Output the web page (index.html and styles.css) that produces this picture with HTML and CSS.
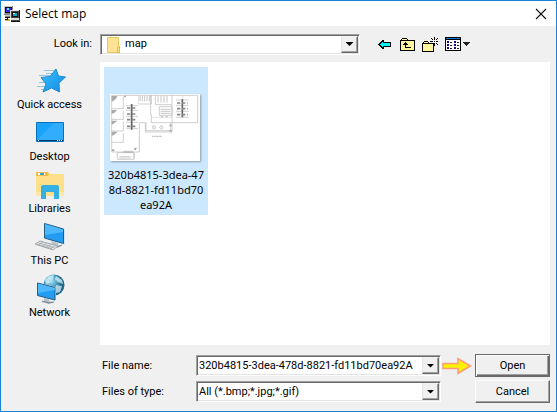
FILE: index.html
```html
<!DOCTYPE html>
<html lang="en">
<head>
<meta charset="utf-8">
<title>Select map</title>
<link rel="stylesheet" href="styles.css">
</head>
<body>
<form class="dialog">
  <header class="titlebar">
    <svg class="app-icon" width="16" height="16" viewBox="0 0 16 16" shape-rendering="crispEdges" aria-hidden="true">
      <path fill="#888" d="M0 0h9v9H0zM1 9h8v3H1z"/><path fill="#c8c8c8" d="M0 0h8v1H1v7H0zM1 9h7v1H1z"/><path fill="#111" d="M1 1h7v6H1zM1 11h7v1H1z"/><path fill="#3a28f0" d="M2 2h5v4H2z"/><path fill="#7df" d="M3 2h2v2H3z"/>
      <path fill="#444" d="M6 4h9v8H6zM7 12h9v4H7z"/><path fill="#ddd" d="M6 4h9v1H7v7H6zM7 12h8v2H7z"/><path fill="#111" d="M8 6h6v5H8zM15 4h1v8h-1zM7 15h9v1H7z"/><path fill="#10a8b8" d="M9 7h4v3H9z"/><path fill="#bff" d="M9 7h2v1H9z"/>
      <path fill="#222" d="M1 13h5v1H1zM3 12h1v3H3z"/><path fill="#e5b526" d="M1 14h3v1H1zM4 13h2v2H4z"/>
    </svg>
    <h1>Select map</h1>
    <button class="close" type="button" aria-label="Close"><svg width="12" height="12" viewBox="0 0 12 12"><path d="M1 1l10 10M11 1L1 11" stroke="#111" stroke-width="1.1"/></svg></button>
  </header>

  <div class="toolbar">
    <label class="look-label" for="look">Look in:</label>
    <div class="combo look">
      <svg class="folder" width="14" height="16" viewBox="0 0 14 16" aria-hidden="true"><path d="M.5.5h11v9h1v6H.5z" fill="#ffe394" stroke="#e9c75b"/><path d="M10.500 15.500v-5l2-1v6z" fill="#ffdf83" stroke="#e2bb42"/></svg>
      <select id="look"><option>map</option></select>
      <span class="drop"></span>
    </div>
    <div class="tools">
      <button class="tool" type="button" aria-label="Back"><svg width="13" height="9" viewBox="0 1 13 9" shape-rendering="crispEdges"><path fill="#000" d="M0 5h1V4h1V3h1V2h1V1h2v2h7v5H6v2H4V9H3V8H2V7H1V6H0z"/><path fill="#00f4ff" d="M2 5h1V4h1V3h1v1h7v3H5v1H4V7H3V6H2z"/></svg></button>
      <button class="tool" type="button" aria-label="Up one level"><svg width="15" height="13" viewBox="0 0 15 13" shape-rendering="crispEdges"><path fill="#000" d="M2 0h5v1h1v1h7v11H0V2h1V1h1z"/><path fill="#fff79b" d="M2 1h5v1H2zM1 3h13v9H1z"/><path fill="#000" d="M5 4h1v1h1v1h1v1H6v2h5v1H5V7H3V6h1V5h1z"/></svg></button>
      <button class="tool" type="button" aria-label="New folder"><svg width="17" height="15" viewBox="0 0 17 15" shape-rendering="crispEdges"><path fill="#000" d="M2 4h4v1h1v1h5v9H0V6h1V5h1z"/><path fill="#fff79b" d="M2 5h4v1H2zM1 7h10v7H1z"/><path fill="#000" d="M12 0h1v3h-1zM12 6h1v3h-1zM8 4h3v1H8zM14 4h2v1h-2zM9 1h1v1H9zM10 2h1v1h-1zM15 1h1v1h-1zM14 2h1v1h-1zM14 6h1v1h-1zM15 7h1v1h-1zM12 4h1v1h-1zM10 6h1v1h-1z"/></svg></button>
      <button class="tool views" type="button" aria-label="View menu"><svg width="25" height="14" viewBox="0 0 25 14" shape-rendering="crispEdges"><path fill="#000" d="M0 0h16v14H0z"/><path fill="#fff" d="M1 3h14v10H1z"/><path fill="#0878d8" d="M1 1h14v1H1z"/><path fill="#101080" d="M2 4h2v2H2zM2 7h2v2H2zM2 10h2v2H2zM9 4h2v2H9zM9 7h2v2H9zM9 10h2v2H9z"/><path fill="#222" d="M5 5h2v1H5zM5 8h2v1H5zM5 11h2v1H5zM12 5h2v1h-2zM12 8h2v1h-2zM12 11h2v1h-2zM18 5h7v1h-1v1h-1v1h-1v1h-1V8h-1V7h-1V6h-1z"/></svg></button>
    </div>
  </div>

  <div class="main">
    <nav class="places">
      <a href="#quick"><svg width="32" height="32" viewBox="0 0 32 32"><defs><linearGradient id="g" x1="0" y1="0" x2="1" y2="1"><stop offset="0" stop-color="#35c0fa"/><stop offset="1" stop-color="#168be6"/></linearGradient></defs><path d="M10 5.500h10M12 8.500h7M5 10.500h11M5 17.500h7M3 21.500h8M7 24.500h3" stroke="#8fc4e4"/><path d="M22 4l2.500 7 7 1-6.500 6 .5 9-8-4-8.500 4L12 19l-5-6.500 9-1z" fill="url(#g)" stroke="#238acb"/></svg><span>Quick access</span></a>
      <a href="#desktop"><svg width="32" height="32" viewBox="0 0 32 32"><path d="M2.500 5.500h27v19h-27z" fill="#1ba2fb" stroke="#0871b9"/><path d="M3 23L20 6h9v17z" fill="#42b4ff" opacity=".6"/><path d="M3 23.500h26" stroke="#073c68"/><path d="M4 23.500h1M23 23.500h1M25 23.500h1M27 23.500h1" stroke="#fff"/></svg><span>Desktop</span></a>
      <a href="#libraries"><svg width="32" height="32" viewBox="0 0 32 32"><path d="M2 4q0-1 1-1h11l2 2h14v22H2z" fill="#ffe08a"/><path d="M2 4q0-1 1-1h11l1 2-1 2H2z" fill="#efbd43"/><path d="M4 4h7v2H4z" fill="#fff"/><path d="M6 4h4v2H6z" fill="#38a7df"/><path d="M7 30V18q0-2 2-2h14q2 0 2 2v12h-5v-7h-8v7z" fill="#36afe2"/><path d="M2 23h5v4H2zM25 23h5v4h-5z" fill="#ffe9aa"/></svg><span>Libraries</span></a>
      <a href="#pc"><svg width="32" height="32" viewBox="0 0 32 32"><path d="M17 19l7 2v3l4 1-5 2-9-2 4-2z" fill="#b9c4cb"/><path d="M15 24l8 2 5-2" fill="none" stroke="#7c8b94"/><path d="M10 2l21 6v16l-21-6z" fill="#d3e4ee"/><path d="M10.500 2.500l19 5.500v14.500l-19-5.500z" fill="#229bf0" stroke="#285d82"/><path d="M11 14l18-3V8.500L11 3z" fill="#5dc4ff" opacity=".7"/><path d="M6 20l18 5-5 4L1 23z" fill="#dfe2e4" stroke="#a4a9ac"/><path d="M5 22l15 4.500M3 23.500l15 4M9 21l-5 3M13 22l-5 4M17 23l-5 4M21 25l-5 3" stroke="#989ea2" stroke-width=".6"/></svg><span>This PC</span></a>
      <a href="#network"><svg width="32" height="32" viewBox="0 0 32 32"><defs><radialGradient id="globe" cx=".35" cy=".3"><stop stop-color="#b5e6f6"/><stop offset=".6" stop-color="#4aa0c4"/><stop offset="1" stop-color="#24698d"/></radialGradient></defs><circle cx="20" cy="12" r="10.500" fill="url(#globe)"/><path d="M11 7l4-4 5-1-1 4-4 1 1 3-4 1zM22 3l6 4 1 4-5-2-3-3zM22 12l6 1-2 6-4 1z" fill="#d4f0f8" opacity=".75"/><path d="M10 25l5 1v2l5 1-5 2-8-2 3-1z" fill="#b5c0c7"/><path d="M8 28l7 2 5-1" fill="none" stroke="#73838d"/><path d="M3 9l19 5v14L3 23z" fill="#d9e8ef"/><path d="M3.500 10l17.500 4.500v12.500L3.500 22.500z" fill="#239cf1" stroke="#285d82"/><path d="M4 20l17-3v-2L4 10.500z" fill="#60c6ff" opacity=".7"/></svg><span>Network</span></a>
    </nav>

    <div class="content">
      <ul class="files">
        <li class="file">
          <svg class="thumb" viewBox="12 18 270 201" role="img" aria-label="Floor plan">
            <g fill="none" stroke="#b8b8b8" stroke-width="2">
              <path d="M17 22h258v82H136V80h-2V22M17 22v170h83v-88h18v28h80v-28M52 26v36H17M52 68v26H17M52 100v29H17M52 135v28H17M120 104v24h74v-24M98 48h38v-26M148 22v28h50V22M160 56h38v26h-38zM198 50v54M34 194h50v20H34zM84 194v18M40 206h34M40 210h34"/>
              <path stroke="#d4d4d4" d="M56 22h42v26M230 22v14M136 88h62M100 150v40M140 145h28"/>
              <path d="M60 53h36M60 67h36M60 85h36M60 103h36M60 122h36M210 36h38M210 52h38M210 70h38M210 88h38"/>
            </g>
            <g fill="#aaa"><path d="M17 24h17l-4 8-7 6-6 3zM17 66h16l-7 8-9 4zM17 98h17l-9 8-8 4zM17 131h18l-8 8-10 5zM54 23h6v5h-6zM18 184h7v6h-7zM84 182l7-5v9h-7zM190 110h7v5h-7zM190 126h7v5h-7z"/></g>
            <g stroke="#666" stroke-width="5"><path d="M77 48v77M229 34v54"/></g>
            <g stroke="#888" stroke-width="5" stroke-dasharray="10 5"><path d="M63 60h30M63 78h30M63 95h30M63 115h30M213 45h32M213 62h32M213 80h32"/></g>
            <g stroke="#aaa" stroke-width="2"><path d="M102 24v16M109 24v16M116 24v16M123 24v16M130 24v16M156 24v20M165 24v20M174 24v20M183 24v20M164 64h30M164 70h30M164 76h30M164 86h8M178 86h8M52 190h30M52 193h30"/></g>
            <g fill="#eee" stroke="#aaa" stroke-width="1.500"><circle cx="144" cy="118" r="5"/><circle cx="166" cy="118" r="5"/></g>
            <path d="M138 145h30" stroke="#bbb" stroke-width="4" stroke-dasharray="3 2"/>
          </svg>
          <span class="file-name">320b4815-3dea-478d-8821-fd11bd70ea92A</span>
        </li>
      </ul>

      <div class="fields">
        <label for="name">File name:</label>
        <div class="combo">
          <input id="name" type="text" value="320b4815-3dea-478d-8821-fd11bd70ea92A">
          <button class="drop" type="button" aria-label="Show file names"></button>
        </div>
        <svg class="pointer" width="30" height="18" viewBox="0 0 30 18" aria-hidden="true"><path d="M1 6.500h15v-5l12.500 7.500L16 16.500v-5H1z" fill="#fff200" stroke="#ff9a7a" stroke-width="1.500"/></svg>
        <button class="action default" type="submit">Open</button>
        <label for="type">Files of type:</label>
        <div class="combo">
          <select id="type"><option>All (*.bmp;*.jpg;*.gif)</option></select>
          <span class="drop"></span>
        </div>
        <button class="action cancel" type="button">Cancel</button>
      </div>
    </div>
  </div>
</form>
</body>
</html>
```

FILE: styles.css
```css
* { box-sizing: border-box; }

body {
  margin: 0;
  color: #000;
  font: 11px/16px Roboto, "Liberation Sans", sans-serif;
}

button, input, select {
  margin: 0;
  padding: 0;
  border: 0;
  border-radius: 0;
  background: none;
  color: inherit;
  font: inherit;
  appearance: none;
  outline: 0;
}

svg { display: block; flex: none; }

.dialog {
  display: flex;
  flex-direction: column;
  min-height: 100vh;
  border: 1px solid #1883d7;
  background: #f0f0f0;
}

.titlebar {
  display: flex;
  align-items: center;
  gap: 5px;
  height: 25px;
  padding: 0 9px 0 3px;
  background: #fff;
}

.titlebar h1 {
  flex: 1;
  margin: 0;
  font: 12px/16px "Open Sans", "Noto Sans", sans-serif;
}

.close { padding: 0; }

.toolbar {
  display: flex;
  align-items: center;
  height: 36px;
  padding-right: 83px;
}

.look-label {
  width: 99px;
  padding-right: 8px;
  text-align: right;
}

.combo {
  position: relative;
  display: flex;
  flex: 1;
  min-width: 0;
  height: 21px;
  border: 1px solid;
  border-color: #a0a0a0 #fff #fff #a0a0a0;
  background: #fff;
  box-shadow: inset 1px 1px #696969, inset -1px -1px #e3e3e3;
}

.combo input, .combo select {
  flex: 1;
  min-width: 0;
  padding: 0 18px 0 2px;
}

.combo.look select { padding-left: 24px; }

.folder {
  position: absolute;
  top: 2px;
  left: 6px;
}

.drop, button.drop {
  position: absolute;
  top: 1px;
  right: 1px;
  bottom: 1px;
  display: grid;
  place-items: center;
  width: 17px;
  border: 1px solid;
  border-color: #f4f4f4 #696969 #696969 #e3e3e3;
  background: #f0f0f0;
  box-shadow: inset -1px -1px #a0a0a0;
  pointer-events: none;
}

.drop::before {
  width: 8px;
  height: 4px;
  background: #000;
  clip-path: polygon(0 0, 100% 0, 50% 100%);
  content: "";
}

.tools { display: flex; padding-left: 13px; }

.tool {
  display: grid;
  place-items: center;
  width: 23px;
  height: 22px;
}

.tool.views { width: 31px; }

.main { display: flex; flex: 1; }

.places {
  display: flex;
  flex-direction: column;
  gap: 4px;
  width: 99px;
  padding: 3px 2px 0 0;
}

.places a {
  display: flex;
  flex-direction: column;
  align-items: center;
  color: inherit;
  text-decoration: none;
}

.content {
  display: flex;
  flex: 1;
  flex-direction: column;
  min-width: 0;
  padding: 0 6px 8px 0;
}

.files {
  display: flex;
  flex: 1;
  align-items: flex-start;
  margin: 0;
  padding: 5px 4px;
  background: #fff;
  list-style: none;
}

.file {
  width: 104px;
  height: 148px;
  padding: 27px 3px 0;
  background: #cce8ff;
}

.thumb {
  width: 90px;
  height: 67px;
  margin: 0 3px 6px;
  background: #fff;
  box-shadow: 1px 1px 2px #8a9aa8;
}

.file-name {
  display: block;
  font: 11px/15px "Noto Sans", "Open Sans", sans-serif;
  text-align: center;
  word-break: break-all;
}

.fields {
  display: grid;
  grid-template-columns: 96px 1fr 34px 75px;
  row-gap: 3px;
  align-items: center;
  padding-top: 9px;
}

.fields label { padding-left: 2px; }

.pointer { margin-left: 1px; }

.action {
  height: 23px;
  border: 1px solid;
  border-color: #fff #696969 #696969 #fff;
  background: #f0f0f0;
  box-shadow: inset -1px -1px #a0a0a0;
}

.action.default {
  border-color: #696969;
  box-shadow: inset 1px 1px #fff, inset -1px -1px #696969, inset -2px -2px #a0a0a0;
}

.action.cancel { grid-column: 4; }
```
